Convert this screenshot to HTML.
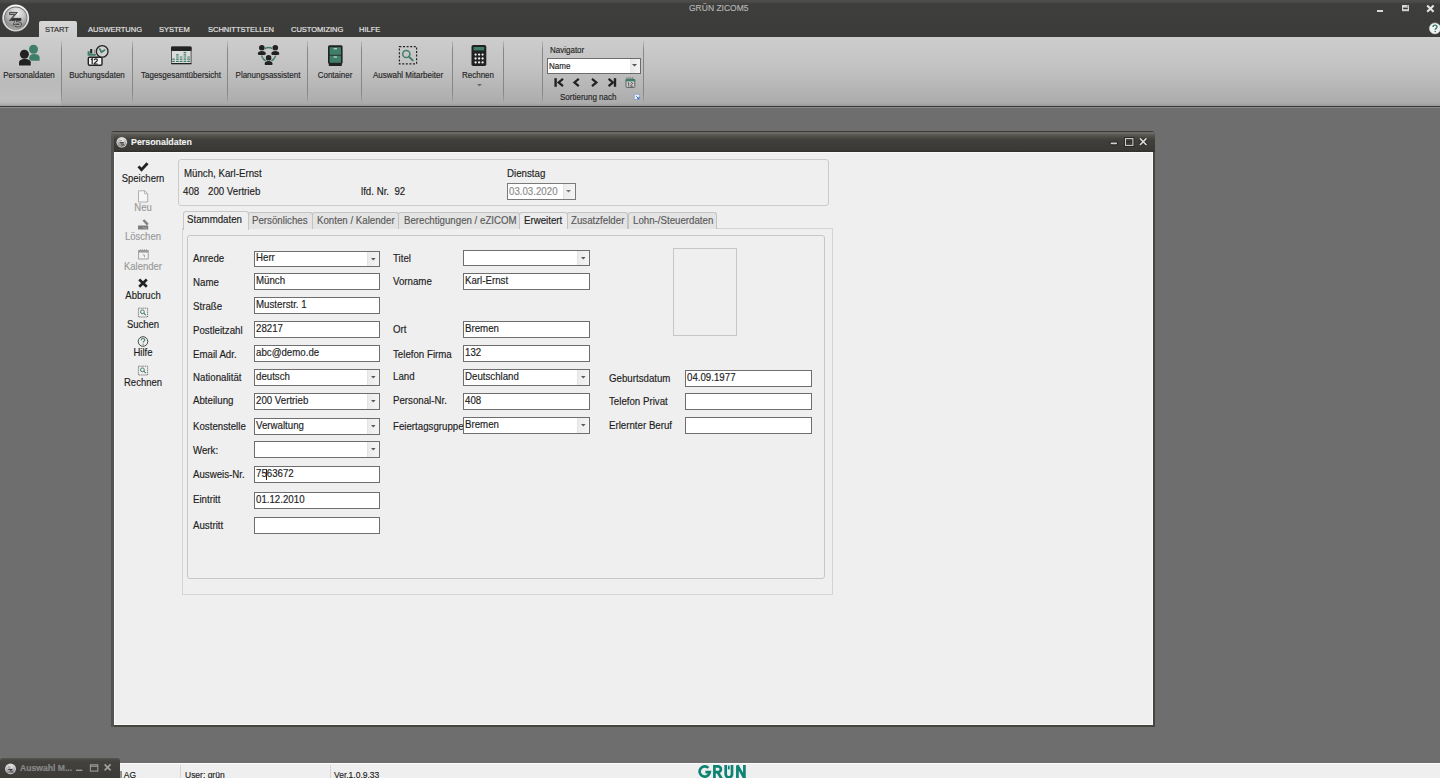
<!DOCTYPE html>
<html><head><meta charset="utf-8">
<style>
*{margin:0;padding:0;box-sizing:border-box}
html,body{width:1440px;height:778px;overflow:hidden}
body{position:relative;background:#6e6e6e;font-family:"Liberation Sans",sans-serif;color:#1e1e1e}
.a{position:absolute}
.t{position:absolute;white-space:nowrap;line-height:1;-webkit-text-stroke:.16px currentColor}
svg{position:absolute;overflow:visible}
</style></head><body>
<div class="a" style="left:0px;top:0px;width:1440px;height:37px;background:linear-gradient(#4e4d4b 0,#4b4a48 2px,#3e3e3c 4px,#3b3b39 100%)"></div>
<svg style="left:0;top:0" width="34" height="36" viewBox="0 0 34 36"><defs><radialGradient id="lg" cx="55%" cy="25%" r="80%"><stop offset="0" stop-color="#f0f0f0"/><stop offset=".45" stop-color="#c4c4c4"/><stop offset=".8" stop-color="#8e8e8e"/><stop offset="1" stop-color="#b8b8b8"/></radialGradient><linearGradient id="lr" x1="0" y1="0" x2="0" y2="1"><stop offset="0" stop-color="#f6f6f6"/><stop offset="1" stop-color="#d0d0d0"/></linearGradient></defs><circle cx="15.7" cy="18" r="13.4" fill="url(#lr)"/><circle cx="15.7" cy="18" r="11.6" fill="#6c6c6c"/><circle cx="15.7" cy="18.3" r="10.9" fill="url(#lg)"/><path d="M9.6 12.4h7.8l-5.2 6h8.8v2.2H9.4l5.2-6H9.6z" fill="#9c9c9c" stroke="#454545" stroke-width="1" stroke-linejoin="round"/><path d="M11.2 19.4h9.6" stroke="#2e2e2e" stroke-width="1.6"/><path d="M15.6 20.6l-.6 2.6c2.6-.9 5.6-.3 5.4 1.2-.2 1.5-3 1.7-4.8 1" stroke="#454545" stroke-width="3" fill="none"/><path d="M15.6 20.6l-.6 2.6c2.6-.9 5.6-.3 5.4 1.2-.2 1.5-3 1.7-4.8 1" stroke="#a8a8a8" stroke-width="1.4" fill="none"/></svg>
<div class="t" style="left:688.80px;top:2.70px;font-size:9.8px;color:#b5b5b5;font-weight:normal;transform:scaleX(0.8673);transform-origin:0 0;">GRÜN ZICOM5</div>
<div class="a" style="left:1377px;top:9.5px;width:6px;height:2.5px;background:#d8d8d8"></div>
<svg style="left:1401px;top:4px" width="10" height="9" viewBox="0 0 10 9"><rect x="1" y="1" width="7" height="6.2" fill="#d6d6d6"/><rect x="2.2" y="3.6" width="4.6" height="1.6" fill="#3a3a3a"/><rect x="6.2" y="1.6" width="1" height="1" fill="#3a3a3a"/></svg>
<svg style="left:1425px;top:4px" width="11" height="10" viewBox="0 0 11 10"><path d="M2.2 1.6l6.4 6.2M8.6 1.6L2.2 7.8" stroke="#e4e4e4" stroke-width="2.1"/></svg>
<svg style="left:1428px;top:22px" width="13" height="13" viewBox="0 0 13 13"><circle cx="6.9" cy="6.4" r="5.5" fill="#f2f2f2" stroke="#cfcfcf" stroke-width=".6"/><path d="M5 5.1c0-1.3.9-2 2-2s2 .7 2 1.8c0 1.4-1.8 1.5-1.8 2.8" stroke="#2e7a64" stroke-width="1.4" fill="none"/><circle cx="7.2" cy="9.5" r=".8" fill="#2e7a64"/></svg>
<div class="a" style="left:39px;top:21px;width:38px;height:17px;border-radius:2px 2px 0 0;background:linear-gradient(#d6d6d6,#cdcdcd)"></div>
<div class="t" style="left:45.00px;top:25.93px;font-size:8.0px;color:#2a2a2a;font-weight:normal;transform:scaleX(0.9375);transform-origin:0 0;">START</div>
<div class="t" style="left:88.30px;top:25.93px;font-size:8.0px;color:#e8e8e8;font-weight:normal;transform:scaleX(0.9375);transform-origin:0 0;">AUSWERTUNG</div>
<div class="t" style="left:159.40px;top:25.93px;font-size:8.0px;color:#e8e8e8;font-weight:normal;transform:scaleX(0.9375);transform-origin:0 0;">SYSTEM</div>
<div class="t" style="left:208.00px;top:25.93px;font-size:8.0px;color:#e8e8e8;font-weight:normal;transform:scaleX(0.9375);transform-origin:0 0;">SCHNITTSTELLEN</div>
<div class="t" style="left:290.50px;top:25.93px;font-size:8.0px;color:#e8e8e8;font-weight:normal;transform:scaleX(0.9375);transform-origin:0 0;">CUSTOMIZING</div>
<div class="t" style="left:359.40px;top:25.93px;font-size:8.0px;color:#e8e8e8;font-weight:normal;transform:scaleX(0.9375);transform-origin:0 0;">HILFE</div>
<div class="a" style="left:0px;top:37px;width:1440px;height:69px;background:linear-gradient(#cdcdcd,#c2c2c2 45%,#aaaaaa)"></div>
<div class="a" style="left:0px;top:80px;width:61px;height:26px;background:linear-gradient(rgba(220,220,220,0),rgba(220,220,220,.35) 70%,rgba(220,220,220,.2))"></div>
<div class="a" style="left:0px;top:103px;width:1440px;height:3px;background:linear-gradient(rgba(120,120,120,0),rgba(120,120,120,.35))"></div>
<div class="a" style="left:0px;top:106px;width:1440px;height:1px;background:#383838"></div>
<div class="a" style="left:0px;top:107px;width:1440px;height:1px;background:#8c8c8c"></div>
<div class="a" style="left:61px;top:41px;width:1px;height:61px;background:linear-gradient(rgba(120,120,120,.2),#868686 15%,#868686 85%,rgba(120,120,120,.2))"></div>
<div class="a" style="left:132px;top:41px;width:1px;height:61px;background:linear-gradient(rgba(120,120,120,.2),#868686 15%,#868686 85%,rgba(120,120,120,.2))"></div>
<div class="a" style="left:227px;top:41px;width:1px;height:61px;background:linear-gradient(rgba(120,120,120,.2),#868686 15%,#868686 85%,rgba(120,120,120,.2))"></div>
<div class="a" style="left:307px;top:41px;width:1px;height:61px;background:linear-gradient(rgba(120,120,120,.2),#868686 15%,#868686 85%,rgba(120,120,120,.2))"></div>
<div class="a" style="left:361px;top:41px;width:1px;height:61px;background:linear-gradient(rgba(120,120,120,.2),#868686 15%,#868686 85%,rgba(120,120,120,.2))"></div>
<div class="a" style="left:452px;top:41px;width:1px;height:61px;background:linear-gradient(rgba(120,120,120,.2),#868686 15%,#868686 85%,rgba(120,120,120,.2))"></div>
<div class="a" style="left:503px;top:41px;width:1px;height:61px;background:linear-gradient(rgba(120,120,120,.2),#868686 15%,#868686 85%,rgba(120,120,120,.2))"></div>
<div class="a" style="left:542px;top:41px;width:1px;height:61px;background:linear-gradient(rgba(120,120,120,.2),#868686 15%,#868686 85%,rgba(120,120,120,.2))"></div>
<div class="a" style="left:643px;top:41px;width:1px;height:61px;background:linear-gradient(rgba(120,120,120,.2),#868686 15%,#868686 85%,rgba(120,120,120,.2))"></div>
<div class="t" style="left:-51.00px;width:160px;text-align:center;top:71.22px;font-size:8.6px;color:#262626;font-weight:normal;transform:scaleX(0.9302);transform-origin:50% 0;">Personaldaten</div>
<div class="t" style="left:17.20px;width:160px;text-align:center;top:71.22px;font-size:8.6px;color:#262626;font-weight:normal;transform:scaleX(0.9302);transform-origin:50% 0;">Buchungsdaten</div>
<div class="t" style="left:100.50px;width:160px;text-align:center;top:71.22px;font-size:8.6px;color:#262626;font-weight:normal;transform:scaleX(0.9302);transform-origin:50% 0;">Tagesgesamtübersicht</div>
<div class="t" style="left:188.10px;width:160px;text-align:center;top:71.22px;font-size:8.6px;color:#262626;font-weight:normal;transform:scaleX(0.9302);transform-origin:50% 0;">Planungsassistent</div>
<div class="t" style="left:255.00px;width:160px;text-align:center;top:71.22px;font-size:8.6px;color:#262626;font-weight:normal;transform:scaleX(0.9302);transform-origin:50% 0;">Container</div>
<div class="t" style="left:327.75px;width:160px;text-align:center;top:71.22px;font-size:8.6px;color:#262626;font-weight:normal;transform:scaleX(0.9302);transform-origin:50% 0;">Auswahl Mitarbeiter</div>
<div class="t" style="left:398.40px;width:160px;text-align:center;top:71.22px;font-size:8.6px;color:#262626;font-weight:normal;transform:scaleX(0.9302);transform-origin:50% 0;">Rechnen</div>
<svg style="left:476.5px;top:84px" width="6" height="4"><path d="M0 0h5L2.5 2.5z" fill="#6a6a6a"/></svg>
<svg style="left:14px;top:40px" width="34" height="30" viewBox="0 0 34 30"><circle cx="19.5" cy="9.25" r="4.5" fill="#3f7f69"/><path d="M15.2 20.8v-3.5c0-2 1.8-3.3 5.2-3.3s5.2 1.3 5.2 3.3v3.5z" fill="#3f7f69"/><circle cx="10.4" cy="14.3" r="5.6" fill="#c9c9c9"/><path d="M4 26.5v-3.5c0-2.7 2.8-4.8 6.8-4.8s6.8 2.1 6.8 4.8v3.5z" fill="#c9c9c9"/><circle cx="10.4" cy="14.3" r="4.5" fill="#222"/><path d="M5 25.6v-3c0-2 2.3-3.5 5.9-3.5s5.9 1.5 5.9 3.5v3z" fill="#222"/></svg>
<svg style="left:80px;top:40px" width="35" height="30" viewBox="0 0 35 30"><path d="M7.6 11.2h2.2v2.5h6v2.1H7.6z" fill="#3f7f69"/><rect x="10.2" y="9" width="2" height="4.4" fill="#222"/><rect x="14.2" y="9.6" width="1.2" height="3.6" fill="#8a8a8a"/><rect x="8.3" y="17.2" width="13.7" height="8.1" rx="1.2" fill="#f2f2f2" stroke="#222" stroke-width="1.4"/><path d="M11 19.6l1.2-.8v5.2M14.2 20.2c.2-.9.9-1.3 1.6-1.3.9 0 1.6.5 1.6 1.3 0 1.2-3.3 2.4-3.3 3.8h3.5" stroke="#222" stroke-width="1.2" fill="none"/><circle cx="22.2" cy="11.4" r="5.8" fill="#d2d2d2" stroke="#222" stroke-width="1.3"/><path d="M19.4 8.3l2 3.8 3.8-2.4" stroke="#3f7f69" stroke-width="1.8" fill="none"/></svg>
<svg style="left:160px;top:40px" width="40" height="30" viewBox="0 0 40 30"><rect x="11.5" y="7" width="19.6" height="16.6" rx="1" fill="#dcdcdc" stroke="#555" stroke-width="1"/><rect x="11" y="23" width="20.6" height="1.2" rx=".5" fill="#222"/><rect x="11" y="6.6" width="20.6" height="4.3" rx="1" fill="#222"/><rect x="12.10" y="20.80" width="2.8" height="1.2" rx=".5" fill="#3f7f69"/><rect x="12.10" y="18.60" width="2.8" height="1.2" rx=".5" fill="#3f7f69"/><rect x="16.00" y="20.80" width="2.8" height="1.2" rx=".5" fill="#3f7f69"/><rect x="16.00" y="18.60" width="2.8" height="1.2" rx=".5" fill="#3f7f69"/><rect x="16.00" y="16.40" width="2.8" height="1.2" rx=".5" fill="#3f7f69"/><rect x="16.00" y="14.20" width="2.8" height="1.2" rx=".5" fill="#3f7f69"/><rect x="19.70" y="20.80" width="2.8" height="1.2" rx=".5" fill="#3f7f69"/><rect x="19.70" y="18.60" width="2.8" height="1.2" rx=".5" fill="#3f7f69"/><rect x="19.70" y="16.40" width="2.8" height="1.2" rx=".5" fill="#3f7f69"/><rect x="23.50" y="20.80" width="2.8" height="1.2" rx=".5" fill="#3f7f69"/><rect x="23.50" y="18.60" width="2.8" height="1.2" rx=".5" fill="#3f7f69"/><rect x="23.50" y="16.40" width="2.8" height="1.2" rx=".5" fill="#3f7f69"/><rect x="23.50" y="14.20" width="2.8" height="1.2" rx=".5" fill="#3f7f69"/><rect x="23.50" y="12.00" width="2.8" height="1.2" rx=".5" fill="#3f7f69"/><rect x="27.20" y="20.80" width="2.8" height="1.2" rx=".5" fill="#3f7f69"/><rect x="27.20" y="18.60" width="2.8" height="1.2" rx=".5" fill="#3f7f69"/><rect x="27.20" y="16.40" width="2.8" height="1.2" rx=".5" fill="#3f7f69"/></svg>
<svg style="left:250px;top:40px" width="36" height="30" viewBox="0 0 36 30"><circle cx="18.6" cy="14.4" r="7" fill="none" stroke="#3f7f69" stroke-width="1.5"/><g stroke="#cacaca" stroke-width="1.1" paint-order="stroke" fill="#222"><circle cx="11.8" cy="7.8" r="2.8"/><path d="M7.800000000000001 13.8c0-1.8 1.6-2.8 4-2.8s4 1 4 2.8c0 .8-.5 1.1-1.2 1.1h-5.6c-.7 0-1.2-.3-1.2-1.1z"/></g><g stroke="#cacaca" stroke-width="1.1" paint-order="stroke" fill="#222"><circle cx="25.3" cy="7.8" r="2.8"/><path d="M21.3 13.8c0-1.8 1.6-2.8 4-2.8s4 1 4 2.8c0 .8-.5 1.1-1.2 1.1h-5.6c-.7 0-1.2-.3-1.2-1.1z"/></g><g stroke="#cacaca" stroke-width="1.1" paint-order="stroke" fill="#222"><circle cx="18.6" cy="17.9" r="2.8"/><path d="M14.600000000000001 23.9c0-1.8 1.6-2.8 4-2.8s4 1 4 2.8c0 .8-.5 1.1-1.2 1.1h-5.6c-.7 0-1.2-.3-1.2-1.1z"/></g></svg>
<svg style="left:320px;top:40px" width="30" height="30" viewBox="0 0 30 30"><rect x="8" y="5.2" width="14.6" height="18.6" rx="1.5" fill="#222"/><rect x="8.8" y="23" width="13" height="3" fill="#222"/><rect x="9.6" y="7.2" width="11.4" height="7.6" fill="#3f7f69"/><rect x="9.6" y="15.6" width="11.4" height="7.2" fill="#3f7f69"/><rect x="13.6" y="8.3" width="3.4" height="1" fill="#e8e8e8"/><rect x="13.6" y="16.5" width="3.4" height="1" fill="#e8e8e8"/></svg>
<svg style="left:390px;top:40px" width="35" height="30" viewBox="0 0 35 30"><rect x="9.4" y="6.6" width="17.2" height="17.2" fill="none" stroke="#222" stroke-width="1.2" stroke-dasharray="2 1.6"/><circle cx="16.3" cy="14" r="3.6" fill="none" stroke="#3f7f69" stroke-width="1.5"/><path d="M18.9 16.6l3.8 3.8" stroke="#3f7f69" stroke-width="2" stroke-linecap="round"/></svg>
<svg style="left:460px;top:40px" width="35" height="30" viewBox="0 0 35 30"><rect x="11.5" y="5" width="14.8" height="21" rx="1.8" fill="#222"/><rect x="13.6" y="7" width="10.6" height="3.4" fill="#3f7f69"/><circle cx="15.60" cy="14.60" r="1.15" fill="#ececec"/><circle cx="19.10" cy="14.60" r="1.15" fill="#ececec"/><circle cx="22.60" cy="14.60" r="1.15" fill="#ececec"/><circle cx="15.60" cy="18.50" r="1.15" fill="#ececec"/><circle cx="19.10" cy="18.50" r="1.15" fill="#ececec"/><circle cx="22.60" cy="18.50" r="1.15" fill="#ececec"/><circle cx="15.60" cy="22.40" r="1.15" fill="#ececec"/><circle cx="19.10" cy="22.40" r="1.15" fill="#ececec"/><circle cx="22.60" cy="22.40" r="1.15" fill="#ececec"/></svg>
<div class="t" style="left:550.00px;top:46.12px;font-size:8.6px;color:#262626;font-weight:normal;transform:scaleX(0.9302);transform-origin:0 0;">Navigator</div>
<div class="a" style="left:547px;top:58px;width:94px;height:16px;background:#fff;border:1px solid #6c6c6c"></div>
<div class="a" style="left:630px;top:59px;width:10px;height:14px;background:linear-gradient(90deg,#e9e9e9,#f4f4f4)"></div>
<svg style="left:632px;top:64px" width="6" height="4"><path d="M0 0h5L2.5 2.5z" fill="#555"/></svg>
<div class="t" style="left:548.50px;top:62.22px;font-size:8.6px;color:#1a1a1a;font-weight:normal;transform:scaleX(0.9302);transform-origin:0 0;">Name</div>
<svg style="left:545px;top:74px" width="100" height="16" viewBox="0 0 100 16"><path d="M10.6 4.2v8.6" stroke="#222" stroke-width="2.4"/><path d="M18 4.8l-4.4 3.6 4.4 3.8" stroke="#222" stroke-width="2.2" fill="none"/><path d="M33.8 4.8l-4.4 3.6 4.4 3.8" stroke="#222" stroke-width="2.2" fill="none"/><path d="M47 4.8l4.4 3.6-4.4 3.8" stroke="#222" stroke-width="2.2" fill="none"/><path d="M63.6 4.8l4.4 3.6-4.4 3.8" stroke="#222" stroke-width="2.2" fill="none"/><path d="M70 4.2v8.6" stroke="#222" stroke-width="2.4"/><rect x="81" y="5.4" width="8.8" height="8" rx=".9" fill="#cfcfcf" stroke="#555" stroke-width=".9"/><rect x="80.7" y="5" width="9.4" height="2.4" fill="#3f7f69"/><path d="M82 3.3v1.6M83.9 3.3v1.6M85.8 3.3v1.6M87.7 3.3v1.6" stroke="#555" stroke-width=".7"/><path d="M82.8 9.2l.9-.5v3.6M85.6 9.4c.2-.5.6-.7 1-.7.6 0 1 .3 1 .8 0 .8-2.1 1.6-2.1 2.7h2.3" stroke="#3a3a3a" stroke-width=".8" fill="none"/></svg>
<div class="t" style="left:560.00px;top:93.42px;font-size:8.6px;color:#262626;font-weight:normal;transform:scaleX(0.9302);transform-origin:0 0;">Sortierung nach</div>
<svg style="left:633px;top:93px" width="8" height="8" viewBox="0 0 8 8"><rect x="1.2" y="1.2" width="5.5" height="5.5" fill="#e8eef6" stroke="#8aa2c2" stroke-width=".8"/><path d="M3.3 3.3l2.6 2.6M6 3.8v2.1H3.9" stroke="#3f6eb0" stroke-width="1" fill="none"/></svg>
<div class="a" style="left:111px;top:131px;width:1044px;height:596px;background:#45443f;border-left:3px solid #54534f;border-radius:4px 4px 0 0"></div>
<div class="a" style="left:114px;top:131px;width:1041px;height:21px;background:linear-gradient(#3a3935 0,#3a3935 1px,#6a6964 1px,#6a6964 2.5px,#5d5c57 3px,#47463f 7px,#403f3b 9px,#3a3935 19px,#2f2e2a 21px);border-radius:0 4px 0 0"></div>
<div class="a" style="left:111px;top:131px;width:3px;height:21px;background:linear-gradient(#3a3935 0,#3a3935 1px,#6a6964 1px,#5d5c57 4px,#54534f 8px);border-radius:4px 0 0 0"></div>
<div class="a" style="left:114px;top:152px;width:1039px;height:573px;background:#efefef;border:1px solid #f9f9f9"></div>
<svg style="left:0;top:0" width="1440" height="778" viewBox="0 0 1440 778"><defs><radialGradient id="tg" cx="50%" cy="25%" r="85%"><stop offset="0" stop-color="#f2f2f2"/><stop offset=".5" stop-color="#bdbdbd"/><stop offset=".85" stop-color="#7a7a7a"/><stop offset="1" stop-color="#a0a0a0"/></radialGradient></defs><g transform="translate(121.80 142.20) scale(0.3955) translate(-15.7 -18)"><circle cx="15.7" cy="18" r="13.4" fill="#e2e2e2"/><circle cx="15.7" cy="18.3" r="11.4" fill="url(#tg)"/><path d="M9.6 12.4h7.8l-5.2 6h8.8v2.2H9.4l5.2-6H9.6z" fill="#8a8a8a"/><path d="M10 19.4h10.6" stroke="#2e2e2e" stroke-width="2.4"/><path d="M15.6 20.6l-.6 2.6c2.6-.9 5.6-.3 5.4 1.2-.2 1.5-3 1.7-4.8 1" stroke="#5a5a5a" stroke-width="2.6" fill="none"/></g></svg>
<div class="t" style="left:131.00px;top:138.01px;font-size:8.85px;color:#f4f4f4;font-weight:bold;text-shadow:0 0 1px rgba(0,0,0,.6)">Personaldaten</div>
<svg style="left:1108px;top:136px" width="44" height="12" viewBox="0 0 44 12"><g stroke="#1e1e1c" opacity=".75"><rect x="2.2" y="6.2" width="7.2" height="2.4" rx="1" fill="#1e1e1c" stroke-width="1.6"/><rect x="17.3" y="2.4" width="7.8" height="7.2" fill="none" stroke-width="2.6"/><path d="M32 2.4l6.4 6.6M38.4 2.4L32 9" stroke-width="3.4"/></g><rect x="2.6" y="6.5" width="6.4" height="1.8" rx=".6" fill="#cfcfcf"/><rect x="17.5" y="2.6" width="7.4" height="6.8" fill="none" stroke="#cfcfcf" stroke-width="1.1"/><path d="M18.5 5.6h5.4" stroke="#2a2a2a" stroke-width="1"/><path d="M32 2.4l6.4 6.6M38.4 2.4L32 9" stroke="#d8d8d8" stroke-width="1.7"/></svg>
<svg style="left:130px;top:158px" width="26" height="230" viewBox="0 0 26 230"><path d="M8.5 8.4l3 3.2 6-6.4" stroke="#222" stroke-width="2.8" fill="none"/><path d="M8.5 32.8h6.2l3 3v8.2h-9.2z" fill="#f6f6f6" stroke="#a8a8a8" stroke-width=".9"/><path d="M14.6 32.8v3h3" fill="none" stroke="#a8a8a8" stroke-width=".8"/><path d="M8 67.5h10.2v4H8z" fill="#7c7c7c"/><path d="M12.5 62.8l1.8-1.6 4.4 4.6-1.8 1.6z" fill="#808080"/><path d="M13.3 69.4l1.2 1M15.3 69.4l1.2 1" stroke="#eee" stroke-width=".6"/><rect x="8.6" y="92.5" width="9.6" height="8.5" fill="#f4f4f4" stroke="#9a9a9a" stroke-width=".9"/><rect x="8.6" y="92.3" width="9.6" height="2.3" fill="#9a9a9a"/><path d="M10.5 91v1.5M12.5 91v1.5M14.5 91v1.5M16.5 91v1.5" stroke="#9a9a9a" stroke-width=".7"/><path d="M12.5 97h2v2.4" stroke="#9a9a9a" stroke-width=".8" fill="none"/><path d="M9.2 121.5l7.6 7.2M16.8 121.5l-7.6 7.2" stroke="#222" stroke-width="2.6"/><rect x="8.4" y="150.2" width="9.2" height="8.8" fill="none" stroke="#444" stroke-width=".8" stroke-dasharray="1.2 .9"/><circle cx="12.4" cy="153.8" r="1.9" fill="none" stroke="#3f7f69" stroke-width="1"/><path d="M13.8 155.2l2 2" stroke="#3f7f69" stroke-width="1.1"/><circle cx="13" cy="183.5" r="4.8" fill="none" stroke="#333" stroke-width=".9"/><path d="M11.2 182.2c0-1 .8-1.7 1.8-1.7s1.8.6 1.8 1.5c0 1.1-1.6 1.2-1.6 2.4" stroke="#3f7f69" stroke-width="1.1" fill="none"/><circle cx="13.2" cy="186.2" r=".65" fill="#3f7f69"/><rect x="8.4" y="208.2" width="9.2" height="8.8" fill="none" stroke="#444" stroke-width=".8" stroke-dasharray="1.2 .9"/><circle cx="12.4" cy="211.8" r="1.9" fill="none" stroke="#3f7f69" stroke-width="1"/><path d="M13.8 213.2l2 2" stroke="#3f7f69" stroke-width="1.1"/></svg>
<div class="t" style="left:63.10px;width:160px;text-align:center;top:174.47px;font-size:10.2px;color:#1e1e1e;font-weight:normal;transform:scaleX(0.9314);transform-origin:50% 0;">Speichern</div>
<div class="t" style="left:63.10px;width:160px;text-align:center;top:202.57px;font-size:10.2px;color:#9a9a9a;font-weight:normal;transform:scaleX(0.9314);transform-origin:50% 0;">Neu</div>
<div class="t" style="left:63.10px;width:160px;text-align:center;top:232.07px;font-size:10.2px;color:#9a9a9a;font-weight:normal;transform:scaleX(0.9314);transform-origin:50% 0;">Löschen</div>
<div class="t" style="left:63.10px;width:160px;text-align:center;top:261.57px;font-size:10.2px;color:#9a9a9a;font-weight:normal;transform:scaleX(0.9314);transform-origin:50% 0;">Kalender</div>
<div class="t" style="left:63.10px;width:160px;text-align:center;top:290.57px;font-size:10.2px;color:#1e1e1e;font-weight:normal;transform:scaleX(0.9314);transform-origin:50% 0;">Abbruch</div>
<div class="t" style="left:63.10px;width:160px;text-align:center;top:319.77px;font-size:10.2px;color:#1e1e1e;font-weight:normal;transform:scaleX(0.9314);transform-origin:50% 0;">Suchen</div>
<div class="t" style="left:63.10px;width:160px;text-align:center;top:348.37px;font-size:10.2px;color:#1e1e1e;font-weight:normal;transform:scaleX(0.9314);transform-origin:50% 0;">Hilfe</div>
<div class="t" style="left:63.10px;width:160px;text-align:center;top:377.87px;font-size:10.2px;color:#1e1e1e;font-weight:normal;transform:scaleX(0.9314);transform-origin:50% 0;">Rechnen</div>
<div class="a" style="left:178px;top:159px;width:651px;height:47px;border:1px solid #cdcaca;border-radius:3px"></div>
<div class="t" style="left:183.70px;top:168.88px;font-size:10.3px;color:#1e1e1e;font-weight:normal;transform:scaleX(0.9417);transform-origin:0 0;">Münch, Karl-Ernst</div>
<div class="t" style="left:183.20px;top:186.68px;font-size:10.3px;color:#1e1e1e;font-weight:normal;transform:scaleX(0.9417);transform-origin:0 0;">408</div>
<div class="t" style="left:208.00px;top:186.68px;font-size:10.3px;color:#1e1e1e;font-weight:normal;transform:scaleX(0.9417);transform-origin:0 0;">200 Vertrieb</div>
<div class="t" style="left:361.30px;top:186.68px;font-size:10.3px;color:#1e1e1e;font-weight:normal;transform:scaleX(0.9417);transform-origin:0 0;">lfd. Nr.&nbsp; 92</div>
<div class="t" style="left:506.70px;top:168.68px;font-size:10.3px;color:#1e1e1e;font-weight:normal;transform:scaleX(0.9417);transform-origin:0 0;">Dienstag</div>
<div class="a" style="left:507px;top:183px;width:69px;height:17px;background:#fff;border:1px solid #7a7a7a"></div>
<div class="a" style="left:563px;top:184px;width:12px;height:15px;background:linear-gradient(90deg,#ececec,#f4f4f4);border-left:1px solid #e2e2e2"></div>
<svg style="left:566px;top:190px" width="6" height="4"><path d="M0 0h5L2.5 2.5z" fill="#777"/></svg>
<div class="t" style="left:508.80px;top:186.98px;font-size:10.3px;color:#8c8c8c;font-weight:normal;transform:scaleX(0.9417);transform-origin:0 0;">03.03.2020</div>
<div class="a" style="left:182px;top:228px;width:651px;height:367px;border:1px solid #d6d3d3"></div>
<div class="a" style="left:247.5px;top:212px;width:65.5px;height:17px;border:1px solid #c4c2c2;border-bottom:none;border-radius:3px 3px 0 0;background:#e4e4e4"></div>
<div class="t" style="left:251.70px;top:215.68px;font-size:10.3px;color:#5a5a5a;font-weight:normal;transform:scaleX(0.9417);transform-origin:0 0;">Persönliches</div>
<div class="a" style="left:312.0px;top:212px;width:87.3px;height:17px;border:1px solid #c4c2c2;border-bottom:none;border-radius:3px 3px 0 0;background:#e4e4e4"></div>
<div class="t" style="left:316.70px;top:215.68px;font-size:10.3px;color:#5a5a5a;font-weight:normal;transform:scaleX(0.9417);transform-origin:0 0;">Konten / Kalender</div>
<div class="a" style="left:398.3px;top:212px;width:121.9px;height:17px;border:1px solid #c4c2c2;border-bottom:none;border-radius:3px 3px 0 0;background:#e4e4e4"></div>
<div class="t" style="left:404.00px;top:215.68px;font-size:10.3px;color:#5a5a5a;font-weight:normal;transform:scaleX(0.9417);transform-origin:0 0;">Berechtigungen / eZICOM</div>
<div class="a" style="left:519.2px;top:212px;width:48.5px;height:17px;border:1px solid #c4c2c2;border-bottom:none;border-radius:3px 3px 0 0;background:#ededed"></div>
<div class="t" style="left:524.00px;top:215.68px;font-size:10.3px;color:#1e1e1e;font-weight:normal;transform:scaleX(0.9417);transform-origin:0 0;">Erweitert</div>
<div class="a" style="left:566.7px;top:212px;width:61.8px;height:17px;border:1px solid #c4c2c2;border-bottom:none;border-radius:3px 3px 0 0;background:#e4e4e4"></div>
<div class="t" style="left:571.30px;top:215.68px;font-size:10.3px;color:#5a5a5a;font-weight:normal;transform:scaleX(0.9417);transform-origin:0 0;">Zusatzfelder</div>
<div class="a" style="left:627.5px;top:212px;width:89.3px;height:17px;border:1px solid #c4c2c2;border-bottom:none;border-radius:3px 3px 0 0;background:#e4e4e4"></div>
<div class="t" style="left:632.50px;top:215.68px;font-size:10.3px;color:#5a5a5a;font-weight:normal;transform:scaleX(0.9417);transform-origin:0 0;">Lohn-/Steuerdaten</div>
<div class="a" style="left:182.5px;top:211px;width:66px;height:19px;border:1px solid #c9c6c6;border-bottom:none;border-radius:3px 3px 0 0;background:#efefef"></div>
<div class="t" style="left:187.40px;top:214.68px;font-size:10.3px;color:#1e1e1e;font-weight:normal;transform:scaleX(0.9417);transform-origin:0 0;">Stammdaten</div>
<div class="a" style="left:187px;top:235px;width:638px;height:344px;border:1px solid #c9c5c5;border-radius:3px"></div>
<div class="a" style="left:673px;top:248px;width:64px;height:88px;border:1px solid #c6c6c6"></div>
<div class="t" style="left:192.50px;top:253.88px;font-size:10.3px;color:#1e1e1e;font-weight:normal;transform:scaleX(0.9417);transform-origin:0 0;">Anrede</div>
<div class="a" style="left:254px;top:251px;width:126px;height:16px;background:#fff;border:1px solid #6e6e6e"></div>
<div class="a" style="left:367px;top:252px;width:12px;height:14px;background:linear-gradient(90deg,#ececec,#f4f4f4);border-left:1px solid #e4e4e4"></div>
<svg style="left:371px;top:258px" width="6" height="4"><path d="M0 0h4.6L2.3 2.4z" fill="#5a5a5a"/></svg>
<div class="t" style="left:256.30px;top:253.28px;font-size:10.3px;color:#1e1e1e;font-weight:normal;transform:scaleX(0.9417);transform-origin:0 0;">Herr</div>
<div class="t" style="left:192.50px;top:277.98px;font-size:10.3px;color:#1e1e1e;font-weight:normal;transform:scaleX(0.9417);transform-origin:0 0;">Name</div>
<div class="a" style="left:254px;top:273px;width:126px;height:17px;background:#fff;border:1px solid #6e6e6e"></div>
<div class="t" style="left:256.30px;top:276.28px;font-size:10.3px;color:#1e1e1e;font-weight:normal;transform:scaleX(0.9417);transform-origin:0 0;">Münch</div>
<div class="t" style="left:192.50px;top:301.68px;font-size:10.3px;color:#1e1e1e;font-weight:normal;transform:scaleX(0.9417);transform-origin:0 0;">Straße</div>
<div class="a" style="left:254px;top:297px;width:126px;height:17px;background:#fff;border:1px solid #6e6e6e"></div>
<div class="t" style="left:256.30px;top:300.28px;font-size:10.3px;color:#1e1e1e;font-weight:normal;transform:scaleX(0.9417);transform-origin:0 0;">Musterstr. 1</div>
<div class="t" style="left:192.50px;top:325.68px;font-size:10.3px;color:#1e1e1e;font-weight:normal;transform:scaleX(0.9417);transform-origin:0 0;">Postleitzahl</div>
<div class="a" style="left:254px;top:321px;width:126px;height:17px;background:#fff;border:1px solid #6e6e6e"></div>
<div class="t" style="left:256.30px;top:324.28px;font-size:10.3px;color:#1e1e1e;font-weight:normal;transform:scaleX(0.9417);transform-origin:0 0;">28217</div>
<div class="t" style="left:192.50px;top:349.98px;font-size:10.3px;color:#1e1e1e;font-weight:normal;transform:scaleX(0.9417);transform-origin:0 0;">Email Adr.</div>
<div class="a" style="left:254px;top:345px;width:126px;height:17px;background:#fff;border:1px solid #6e6e6e"></div>
<div class="t" style="left:256.30px;top:348.28px;font-size:10.3px;color:#1e1e1e;font-weight:normal;transform:scaleX(0.9417);transform-origin:0 0;">abc@demo.de</div>
<div class="t" style="left:192.50px;top:372.58px;font-size:10.3px;color:#1e1e1e;font-weight:normal;transform:scaleX(0.9417);transform-origin:0 0;">Nationalität</div>
<div class="a" style="left:254px;top:369px;width:126px;height:17px;background:#fff;border:1px solid #6e6e6e"></div>
<div class="a" style="left:367px;top:370px;width:12px;height:15px;background:linear-gradient(90deg,#ececec,#f4f4f4);border-left:1px solid #e4e4e4"></div>
<svg style="left:371px;top:376px" width="6" height="4"><path d="M0 0h4.6L2.3 2.4z" fill="#5a5a5a"/></svg>
<div class="t" style="left:256.30px;top:372.28px;font-size:10.3px;color:#1e1e1e;font-weight:normal;transform:scaleX(0.9417);transform-origin:0 0;">deutsch</div>
<div class="t" style="left:192.50px;top:395.98px;font-size:10.3px;color:#1e1e1e;font-weight:normal;transform:scaleX(0.9417);transform-origin:0 0;">Abteilung</div>
<div class="a" style="left:254px;top:393px;width:126px;height:17px;background:#fff;border:1px solid #6e6e6e"></div>
<div class="a" style="left:367px;top:394px;width:12px;height:15px;background:linear-gradient(90deg,#ececec,#f4f4f4);border-left:1px solid #e4e4e4"></div>
<svg style="left:371px;top:400px" width="6" height="4"><path d="M0 0h4.6L2.3 2.4z" fill="#5a5a5a"/></svg>
<div class="t" style="left:256.30px;top:396.28px;font-size:10.3px;color:#1e1e1e;font-weight:normal;transform:scaleX(0.9417);transform-origin:0 0;">200 Vertrieb</div>
<div class="t" style="left:192.50px;top:421.68px;font-size:10.3px;color:#1e1e1e;font-weight:normal;transform:scaleX(0.9417);transform-origin:0 0;">Kostenstelle</div>
<div class="a" style="left:254px;top:418px;width:126px;height:17px;background:#fff;border:1px solid #6e6e6e"></div>
<div class="a" style="left:367px;top:419px;width:12px;height:15px;background:linear-gradient(90deg,#ececec,#f4f4f4);border-left:1px solid #e4e4e4"></div>
<svg style="left:371px;top:425px" width="6" height="4"><path d="M0 0h4.6L2.3 2.4z" fill="#5a5a5a"/></svg>
<div class="t" style="left:256.30px;top:421.28px;font-size:10.3px;color:#1e1e1e;font-weight:normal;transform:scaleX(0.9417);transform-origin:0 0;">Verwaltung</div>
<div class="t" style="left:192.50px;top:445.78px;font-size:10.3px;color:#1e1e1e;font-weight:normal;transform:scaleX(0.9417);transform-origin:0 0;">Werk:</div>
<div class="a" style="left:254px;top:441px;width:126px;height:17px;background:#fff;border:1px solid #6e6e6e"></div>
<div class="a" style="left:367px;top:442px;width:12px;height:15px;background:linear-gradient(90deg,#ececec,#f4f4f4);border-left:1px solid #e4e4e4"></div>
<svg style="left:371px;top:448px" width="6" height="4"><path d="M0 0h4.6L2.3 2.4z" fill="#5a5a5a"/></svg>
<div class="t" style="left:192.50px;top:469.68px;font-size:10.3px;color:#1e1e1e;font-weight:normal;transform:scaleX(0.9417);transform-origin:0 0;">Ausweis-Nr.</div>
<div class="a" style="left:254px;top:466px;width:126px;height:17px;background:#fff;border:1px solid #6e6e6e"></div>
<div class="t" style="left:256.30px;top:469.28px;font-size:10.3px;color:#1e1e1e;font-weight:normal;transform:scaleX(0.9417);transform-origin:0 0;">7563672</div>
<div class="t" style="left:192.50px;top:494.68px;font-size:10.3px;color:#1e1e1e;font-weight:normal;transform:scaleX(0.9417);transform-origin:0 0;">Eintritt</div>
<div class="a" style="left:254px;top:492px;width:126px;height:17px;background:#fff;border:1px solid #6e6e6e"></div>
<div class="t" style="left:256.30px;top:495.28px;font-size:10.3px;color:#1e1e1e;font-weight:normal;transform:scaleX(0.9417);transform-origin:0 0;">01.12.2010</div>
<div class="t" style="left:192.50px;top:520.58px;font-size:10.3px;color:#1e1e1e;font-weight:normal;transform:scaleX(0.9417);transform-origin:0 0;">Austritt</div>
<div class="a" style="left:254px;top:517px;width:126px;height:17px;background:#fff;border:1px solid #6e6e6e"></div>
<div class="a" style="left:266px;top:469px;width:1px;height:11px;background:#222"></div>
<div class="t" style="left:392.50px;top:254.08px;font-size:10.3px;color:#1e1e1e;font-weight:normal;transform:scaleX(0.9417);transform-origin:0 0;">Titel</div>
<div class="a" style="left:463px;top:250px;width:127px;height:16px;background:#fff;border:1px solid #6e6e6e"></div>
<div class="a" style="left:577px;top:251px;width:12px;height:14px;background:linear-gradient(90deg,#ececec,#f4f4f4);border-left:1px solid #e4e4e4"></div>
<svg style="left:581px;top:257px" width="6" height="4"><path d="M0 0h4.6L2.3 2.4z" fill="#5a5a5a"/></svg>
<div class="t" style="left:392.50px;top:277.48px;font-size:10.3px;color:#1e1e1e;font-weight:normal;transform:scaleX(0.9417);transform-origin:0 0;">Vorname</div>
<div class="a" style="left:463px;top:273px;width:127px;height:17px;background:#fff;border:1px solid #6e6e6e"></div>
<div class="t" style="left:465.30px;top:276.28px;font-size:10.3px;color:#1e1e1e;font-weight:normal;transform:scaleX(0.9417);transform-origin:0 0;">Karl-Ernst</div>
<div class="t" style="left:392.50px;top:325.28px;font-size:10.3px;color:#1e1e1e;font-weight:normal;transform:scaleX(0.9417);transform-origin:0 0;">Ort</div>
<div class="a" style="left:463px;top:321px;width:127px;height:17px;background:#fff;border:1px solid #6e6e6e"></div>
<div class="t" style="left:465.30px;top:324.28px;font-size:10.3px;color:#1e1e1e;font-weight:normal;transform:scaleX(0.9417);transform-origin:0 0;">Bremen</div>
<div class="t" style="left:392.50px;top:349.88px;font-size:10.3px;color:#1e1e1e;font-weight:normal;transform:scaleX(0.9417);transform-origin:0 0;">Telefon Firma</div>
<div class="a" style="left:463px;top:345px;width:127px;height:17px;background:#fff;border:1px solid #6e6e6e"></div>
<div class="t" style="left:465.30px;top:348.28px;font-size:10.3px;color:#1e1e1e;font-weight:normal;transform:scaleX(0.9417);transform-origin:0 0;">132</div>
<div class="t" style="left:392.50px;top:372.28px;font-size:10.3px;color:#1e1e1e;font-weight:normal;transform:scaleX(0.9417);transform-origin:0 0;">Land</div>
<div class="a" style="left:463px;top:369px;width:127px;height:17px;background:#fff;border:1px solid #6e6e6e"></div>
<div class="a" style="left:577px;top:370px;width:12px;height:15px;background:linear-gradient(90deg,#ececec,#f4f4f4);border-left:1px solid #e4e4e4"></div>
<svg style="left:581px;top:376px" width="6" height="4"><path d="M0 0h4.6L2.3 2.4z" fill="#5a5a5a"/></svg>
<div class="t" style="left:465.30px;top:372.28px;font-size:10.3px;color:#1e1e1e;font-weight:normal;transform:scaleX(0.9417);transform-origin:0 0;">Deutschland</div>
<div class="t" style="left:392.50px;top:396.48px;font-size:10.3px;color:#1e1e1e;font-weight:normal;transform:scaleX(0.9417);transform-origin:0 0;">Personal-Nr.</div>
<div class="a" style="left:463px;top:393px;width:127px;height:17px;background:#fff;border:1px solid #6e6e6e"></div>
<div class="t" style="left:465.30px;top:396.28px;font-size:10.3px;color:#1e1e1e;font-weight:normal;transform:scaleX(0.9417);transform-origin:0 0;">408</div>
<div class="t" style="left:392.50px;top:421.58px;font-size:10.3px;color:#1e1e1e;font-weight:normal;transform:scaleX(0.9417);transform-origin:0 0;">Feiertagsgruppe</div>
<div class="a" style="left:463px;top:417px;width:127px;height:17px;background:#fff;border:1px solid #6e6e6e"></div>
<div class="a" style="left:577px;top:418px;width:12px;height:15px;background:linear-gradient(90deg,#ececec,#f4f4f4);border-left:1px solid #e4e4e4"></div>
<svg style="left:581px;top:424px" width="6" height="4"><path d="M0 0h4.6L2.3 2.4z" fill="#5a5a5a"/></svg>
<div class="t" style="left:465.30px;top:420.28px;font-size:10.3px;color:#1e1e1e;font-weight:normal;transform:scaleX(0.9417);transform-origin:0 0;">Bremen</div>
<div class="t" style="left:608.80px;top:374.38px;font-size:10.3px;color:#1e1e1e;font-weight:normal;transform:scaleX(0.9417);transform-origin:0 0;">Geburtsdatum</div>
<div class="a" style="left:685px;top:370px;width:127px;height:17px;background:#fff;border:1px solid #6e6e6e"></div>
<div class="t" style="left:687.30px;top:373.28px;font-size:10.3px;color:#1e1e1e;font-weight:normal;transform:scaleX(0.9417);transform-origin:0 0;">04.09.1977</div>
<div class="t" style="left:608.80px;top:396.68px;font-size:10.3px;color:#1e1e1e;font-weight:normal;transform:scaleX(0.9417);transform-origin:0 0;">Telefon Privat</div>
<div class="a" style="left:685px;top:393px;width:127px;height:17px;background:#fff;border:1px solid #6e6e6e"></div>
<div class="t" style="left:608.80px;top:421.48px;font-size:10.3px;color:#1e1e1e;font-weight:normal;transform:scaleX(0.9417);transform-origin:0 0;">Erlernter Beruf</div>
<div class="a" style="left:685px;top:417px;width:127px;height:17px;background:#fff;border:1px solid #6e6e6e"></div>
<div class="a" style="left:0px;top:763px;width:1440px;height:15px;background:#efefef;border-top:1px solid #fbfbfb"></div>
<div class="a" style="left:180px;top:765px;width:1px;height:13px;background:#d6d6d6"></div>
<div class="a" style="left:330px;top:765px;width:1px;height:13px;background:#d6d6d6"></div>
<div class="t" style="left:119.50px;top:770.80px;font-size:9.1px;color:#222;font-weight:normal;transform:scaleX(0.9330);transform-origin:0 0;">l AG</div>
<div class="t" style="left:184.60px;top:770.80px;font-size:9.1px;color:#222;font-weight:normal;transform:scaleX(0.9330);transform-origin:0 0;">User: grün</div>
<div class="t" style="left:334.00px;top:770.80px;font-size:9.1px;color:#222;font-weight:normal;transform:scaleX(0.9330);transform-origin:0 0;">Ver.1.0.9.33</div>
<svg style="left:0;top:0" width="1440" height="778" viewBox="0 0 1440 778"><g fill="none" stroke="#0d8373" stroke-width="2.7"><path d="M708.4 767.9A5.1 5.1 0 1 0 709.8 772.1H705.4"/><path d="M714.4 765v15M714.4 766.4h3.6a2.9 2.9 0 0 1 0 5.8h-3.6M717.8 772.2l4 6.8"/><path d="M725.7 765v9.2a3.15 3.15 0 0 0 6.3 0v-9.2"/><path d="M728.8 765.6v3.8" stroke-width="1.8"/><path d="M737.4 780v-14.6l7 12.8v-13.2"/></g></svg>
<div class="a" style="left:0px;top:758px;width:120px;height:20px;background:linear-gradient(#55534f,#43423e 3px,#3c3b37);border-radius:3px 3px 0 0"></div>
<svg style="left:0;top:0" width="1440" height="778" viewBox="0 0 1440 778"><defs><radialGradient id="mg" cx="50%" cy="25%" r="85%"><stop offset="0" stop-color="#f2f2f2"/><stop offset=".5" stop-color="#bdbdbd"/><stop offset=".85" stop-color="#7a7a7a"/><stop offset="1" stop-color="#a0a0a0"/></radialGradient></defs><g transform="translate(10.50 768.80) scale(0.4030) translate(-15.7 -18)"><circle cx="15.7" cy="18" r="13.4" fill="#e2e2e2"/><circle cx="15.7" cy="18.3" r="11.4" fill="url(#mg)"/><path d="M9.6 12.4h7.8l-5.2 6h8.8v2.2H9.4l5.2-6H9.6z" fill="#8a8a8a"/><path d="M10 19.4h10.6" stroke="#2e2e2e" stroke-width="2.4"/><path d="M15.6 20.6l-.6 2.6c2.6-.9 5.6-.3 5.4 1.2-.2 1.5-3 1.7-4.8 1" stroke="#5a5a5a" stroke-width="2.6" fill="none"/></g></svg>
<div class="t" style="left:20.00px;top:764.42px;font-size:8.6px;color:#8a8a8a;font-weight:bold;">Auswahl M...</div>
<svg style="left:74px;top:762px" width="44" height="12" viewBox="0 0 44 12"><rect x="2" y="7.6" width="6.4" height="1.4" fill="#9a9a9a"/><rect x="16.4" y="2.8" width="7.4" height="6.3" fill="none" stroke="#9a9a9a" stroke-width="1.1"/><path d="M16.4 4.2h7.4" stroke="#9a9a9a" stroke-width="1.2"/><path d="M30.6 2.4l6 6M36.6 2.4l-6 6" stroke="#a4a4a4" stroke-width="1.5"/></svg>
</body></html>
